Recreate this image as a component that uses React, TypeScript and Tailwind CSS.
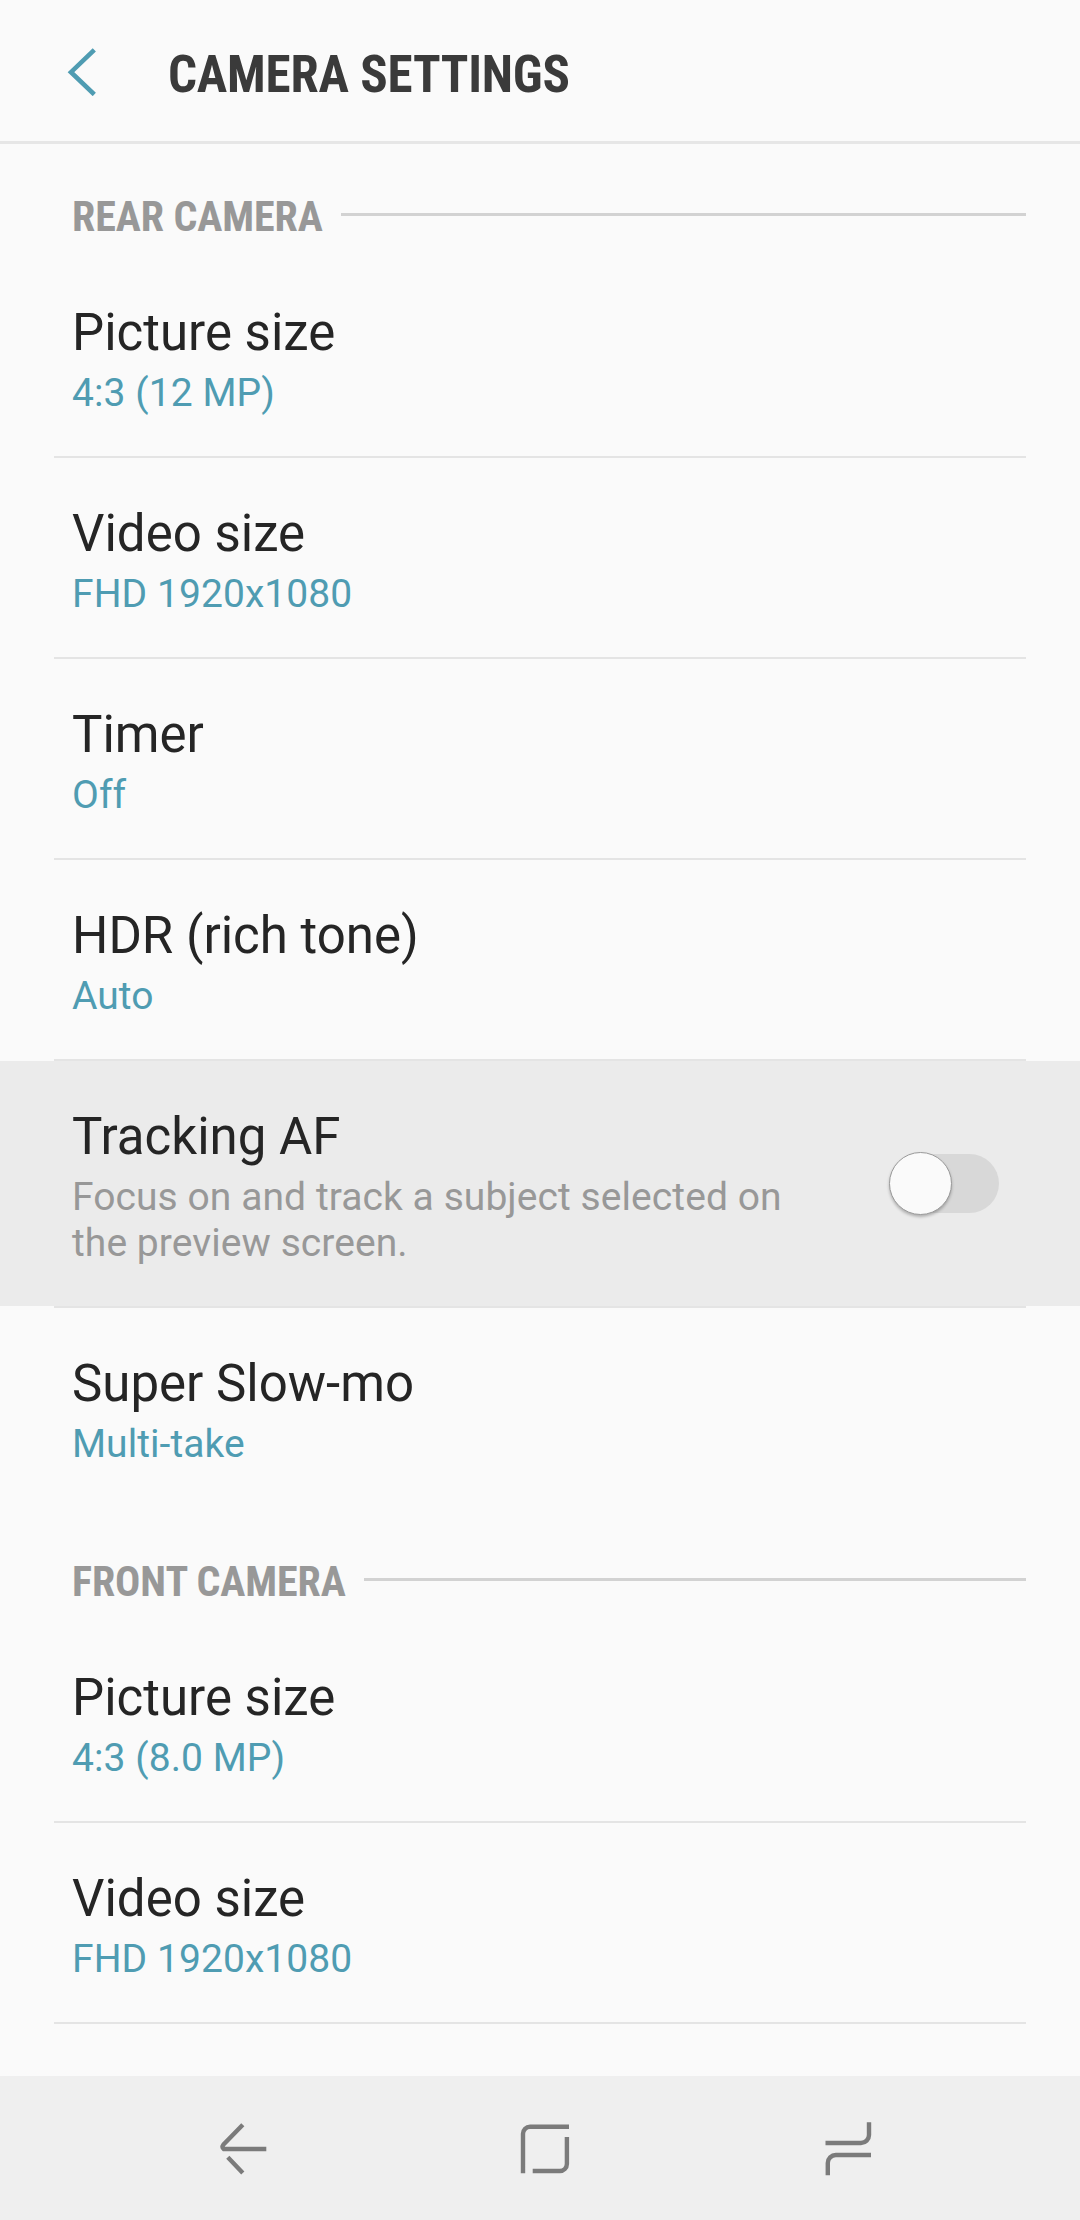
type Row = {
  title: string;
  value?: string;
  description?: string;
};

const rearRows: Row[] = [
  { title: "Picture size", value: "4:3 (12 MP)" },
  { title: "Video size", value: "FHD 1920x1080" },
  { title: "Timer", value: "Off" },
  { title: "HDR (rich tone)", value: "Auto" },
  {
    title: "Tracking AF",
    description: "Focus on and track a subject selected on the preview screen.",
  },
  { title: "Super Slow-mo", value: "Multi-take" },
];

const frontRows: Row[] = [
  { title: "Picture size", value: "4:3 (8.0 MP)" },
  { title: "Video size", value: "FHD 1920x1080" },
];

function SectionTitle({ children }: { children: string }) {
  return (
    <div className="flex h-[113px] pl-18 pr-[54px] pt-12">
      <h2 className="h-[50px] whitespace-nowrap text-[42px] font-bold leading-[50px] tracking-[-0.08px] text-[#989898] [font-stretch:75%]">
        {children}
      </h2>
      <div className="ml-[18px] mt-[21px] h-[3px] flex-1 bg-[#d2d2d2]" />
    </div>
  );
}

function Toggle() {
  return (
    <div className="relative mr-[27px] h-[59px] w-[108px] shrink-0 rounded-full bg-[#d8d8d8]">
      <div className="absolute -left-[2px] -top-[2px] size-[63px] rounded-full border border-[#9a9a9a] bg-[#fafafa] shadow-[0_2px_3px_rgba(0,0,0,0.25)]" />
    </div>
  );
}

function SettingRow({ row, divider }: { row: Row; divider: boolean }) {
  return (
    <li>
      <div
        className={
          row.description
            ? "flex items-center justify-between bg-[#ebebeb] pl-18 pr-[54px]"
            : "flex items-center justify-between pl-18 pr-[54px]"
        }
      >
        <div className="w-[730px] pb-10 pt-[46px]">
          <h3 className="text-[51px] leading-[60px] text-[#252525]">{row.title}</h3>
          {row.value && (
            <p className="mt-[7px] text-[39px] leading-[46px] tracking-[0.07px] text-[#4f9cb2]">{row.value}</p>
          )}
          {row.description && (
            <p className="mt-[7px] text-[39px] leading-[46px] tracking-[0.07px] text-[#989898]">{row.description}</p>
          )}
        </div>
        {row.description && <Toggle />}
      </div>
      <div className={divider ? "mx-[54px] h-[2px] bg-[#e4e4e4]" : "h-[2px]"} />
    </li>
  );
}

export default function App() {
  return (
    <div className="flex h-[2220px] w-[1080px] flex-col overflow-hidden bg-[#fafafa] font-['Roboto',sans-serif]">
      <header className="flex h-36 shrink-0 items-center border-b-3 border-[#e6e6e6] pl-[66px]">
        <svg className="mt-[3px] h-12 w-8" viewBox="66 48 32 48" fill="none" stroke="#4f9cb2" strokeWidth="4.6">
          <path d="M94.3 49.8L71 72.2L94.3 94.5" />
        </svg>
        <h1 className="ml-[70px] mt-[9px] whitespace-nowrap text-[51px] font-bold leading-[60px] tracking-[-0.2px] text-[#3a3a3a] [font-stretch:75%]">
          CAMERA SETTINGS
        </h1>
      </header>

      <main className="flex-1">
        <SectionTitle>REAR CAMERA</SectionTitle>
        <ul>
          {rearRows.map((row, i) => (
            <SettingRow key={row.title} row={row} divider={i < rearRows.length - 1} />
          ))}
        </ul>

        <SectionTitle>FRONT CAMERA</SectionTitle>
        <ul>
          {frontRows.map((row) => (
            <SettingRow key={row.title} row={row} divider />
          ))}
        </ul>
      </main>

      <nav className="flex h-36 shrink-0 gap-40 bg-[#efefef] pl-[180px]">
        {/* back */}
        <svg className="h-36 w-35" viewBox="0 16 140 144" fill="none" stroke="#7b7b7b" strokeWidth="4.4">
          <path d="M62.8 64.8L43.3 84.8Q41.5 87 43.8 89H86.3M47.8 97.2L62.8 113" />
        </svg>
        {/* home */}
        <svg className="h-36 w-35" viewBox="0 16 140 144" fill="none" stroke="#7b7b7b" strokeWidth="4.4">
          <path d="M89 66.8H50a7 7 0 0 0-7 7V113.3M86.9 77V104a7 7 0 0 1-7 7H52.7" />
        </svg>
        {/* recents */}
        <svg className="h-36 w-35" viewBox="0 16 140 144" fill="none" stroke="#7b7b7b" strokeWidth="4.4">
          <path d="M89 62.3V75a8 8 0 0 1-8 8H45.5M91 95H55.8a8 8 0 0 0-8 8V115.3" />
        </svg>
      </nav>
    </div>
  );
}
